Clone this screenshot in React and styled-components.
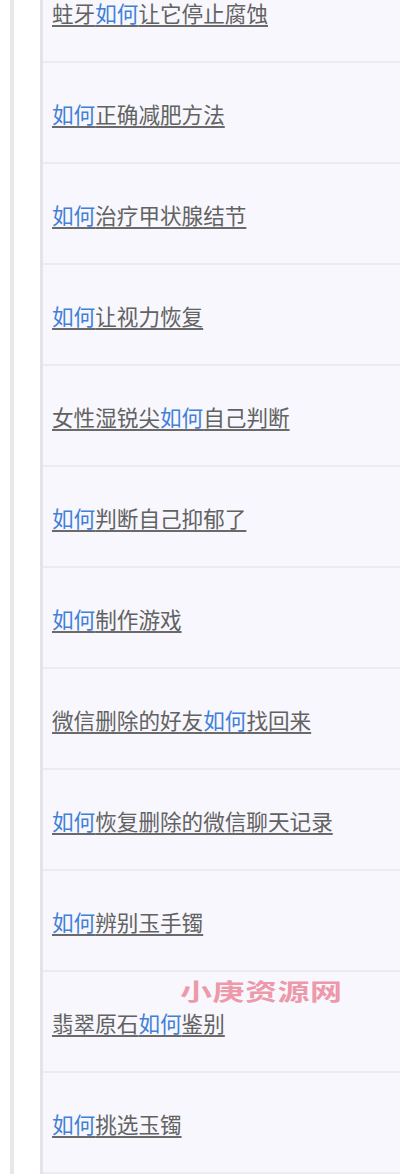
import styled, { createGlobalStyle } from "styled-components";

const GlobalStyle = createGlobalStyle`
  html, body {
    margin: 0;
    padding: 0;
    background: #fff;
    overflow: hidden;
  }
  body {
    font-family: "Noto Sans CJK SC", "Noto Sans", sans-serif;
  }
`;

const Page = styled.div`
  position: relative;
  height: 1174px;
  overflow: hidden;
  padding-left: 10px;
`;

const Rail = styled.div`
  border-left: 4px solid #e8e8ea;
  padding-left: 26px;
  min-height: 1300px;
`;

const List = styled.ul`
  list-style: none;
  margin: -38px 0 0;
  padding: 0;
  border-left: 3px solid #e4e4e8;
  background: #f7f7fd;
`;

const Item = styled.li`
  display: flex;
  align-items: center;
  padding: 3px 0 0 9px;
  box-sizing: border-box;
  height: 101px;
  border-bottom: 2px solid #ebebf0;
`;

const Link = styled.a`
  font-size: 21.6px;
  line-height: 1;
  color: #626262;
  text-decoration: underline;
  text-decoration-color: #6a6a6a;
  text-underline-offset: 3px;
`;

const Keyword = styled.span`
  color: #3f80d8;
  text-decoration-color: #3f80d8;
`;

const Watermark = styled.div`
  position: absolute;
  left: 180px;
  top: 978px;
  font-size: 32px;
  line-height: 1;
  font-weight: 700;
  letter-spacing: 0.5px;
  color: #ec8fa2;
  opacity: 0.9;
  transform: scaleY(0.72);
  transform-origin: left top;
  pointer-events: none;
`;

const items = [
  ["蛀牙", "如何", "让它停止腐蚀"],
  ["", "如何", "正确减肥方法"],
  ["", "如何", "治疗甲状腺结节"],
  ["", "如何", "让视力恢复"],
  ["女性湿锐尖", "如何", "自己判断"],
  ["", "如何", "判断自己抑郁了"],
  ["", "如何", "制作游戏"],
  ["微信删除的好友", "如何", "找回来"],
  ["", "如何", "恢复删除的微信聊天记录"],
  ["", "如何", "辨别玉手镯"],
  ["翡翠原石", "如何", "鉴别"],
  ["", "如何", "挑选玉镯"],
];

export default function App() {
  return (
    <Page>
      <GlobalStyle />
      <Rail>
        <List>
          {items.map(([pre, key, post], i) => (
            <Item key={i}>
              <Link href="#">
                {pre}
                <Keyword>{key}</Keyword>
                {post}
              </Link>
            </Item>
          ))}
        </List>
      </Rail>
      <Watermark>小庚资源网</Watermark>
    </Page>
  );
}
